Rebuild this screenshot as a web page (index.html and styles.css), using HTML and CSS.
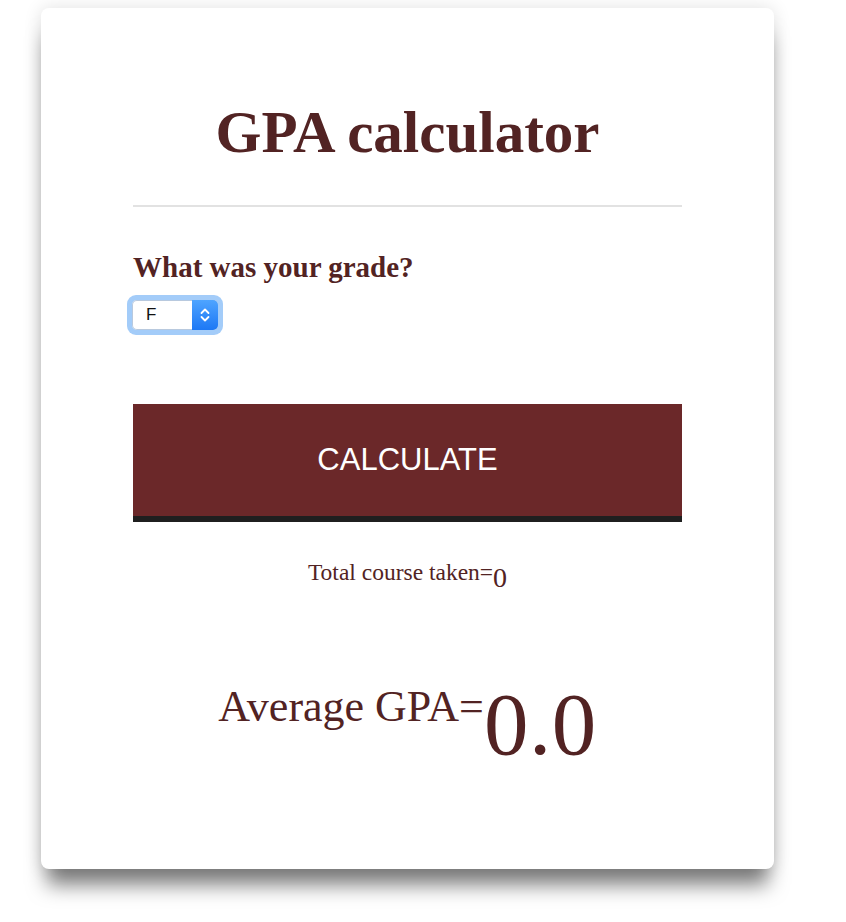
FILE: index.html
```html
<!DOCTYPE html>
<html>
<head>
<meta charset="utf-8">
<link rel="stylesheet" href="styles.css">
</head>
<body>
<div class="card">
  <h1 class="title">GPA calculator</h1>
  <hr class="rule">
  <label class="question">What was your grade?</label>
  <div class="select-ring">
    <div class="select">
      <span class="select-value">F</span>
      <span class="select-arrows">
        <svg width="12" height="16" viewBox="0 0 12 16"><path d="M2.5 6 L6 2.5 L9.5 6 M2.5 10 L6 13.5 L9.5 10" fill="none" stroke="#fff" stroke-width="1.8" stroke-linecap="round" stroke-linejoin="round"/></svg>
      </span>
    </div>
  </div>
  <button class="calc">CALCULATE</button>
  <p class="total">Total course taken=<span class="total-num">0</span></p>
  <p class="avg">Average GPA=<span class="avg-num">0.0</span></p>
</div>
</body>
</html>
```

FILE: styles.css
```css
html, body { margin: 0; padding: 0; background: #fff; }
body { padding: 8px 0 60px 41px; }
.card {
  width: 733px;
  height: 861px;
  box-sizing: border-box;
  background: #fff;
  border-radius: 8px;
  box-shadow: 0 22px 20px -6px rgba(0,0,0,0.5), 0 0 18px rgba(0,0,0,0.12);
  padding: 88px 92px 0 92px;
  font-family: "Liberation Serif", "Times New Roman", serif;
  color: #522323;
  display: flex;
  flex-direction: column;
}
.card > * { flex-shrink: 0; }
.title {
  margin: 0;
  text-align: center;
  font-size: 59px;
  font-weight: bold;
  line-height: 72px;
}
.rule {
  margin: 37px 0 0 0;
  border: 0;
  height: 2px;
  background: #e2e2e2;
}
.question {
  margin-top: 43px;
  font-size: 29px;
  font-weight: bold;
  line-height: 34px;
}
.select-ring {
  margin-top: 11px;
  margin-left: -6px;
  width: 96px;
  height: 40px;
  box-sizing: border-box;
  border-radius: 9px;
  background: #a3ccf9;
  padding: 5px 5px;
}
.select {
  height: 30px;
  display: flex;
  border-radius: 5px;
  overflow: hidden;
  background: #fff;
  box-shadow: inset 0 0 0 1px #b8c9de;
}
.select-value {
  flex: 1;
  font-family: "Liberation Sans", Arial, sans-serif;
  font-size: 17px;
  color: #111;
  line-height: 30px;
  padding-left: 14px;
}
.select-arrows {
  width: 26px;
  background: linear-gradient(#4ea4ff, #1d78f5);
  display: flex;
  align-items: center;
  justify-content: center;
}
.calc {
  margin-top: 69px;
  height: 118px;
  width: 100%;
  border: 0;
  border-bottom: 6px solid #1f1f1f;
  background: #6b2829;
  color: #fff;
  font-family: "Liberation Sans", Arial, sans-serif;
  font-size: 31px;
  padding: 0;
  cursor: pointer;
}
.total {
  margin: 35px 0 0 0;
  text-align: center;
  font-size: 23.5px;
  line-height: 30px;
}
.total-num {
  font-size: 28px;
  vertical-align: -7px;
}
.avg {
  margin: 84px 0 0 0;
  text-align: center;
  font-size: 44px;
  line-height: 60px;
}
.avg-num {
  font-size: 89px;
  vertical-align: -33px;
  letter-spacing: 0.5px;
}
```
